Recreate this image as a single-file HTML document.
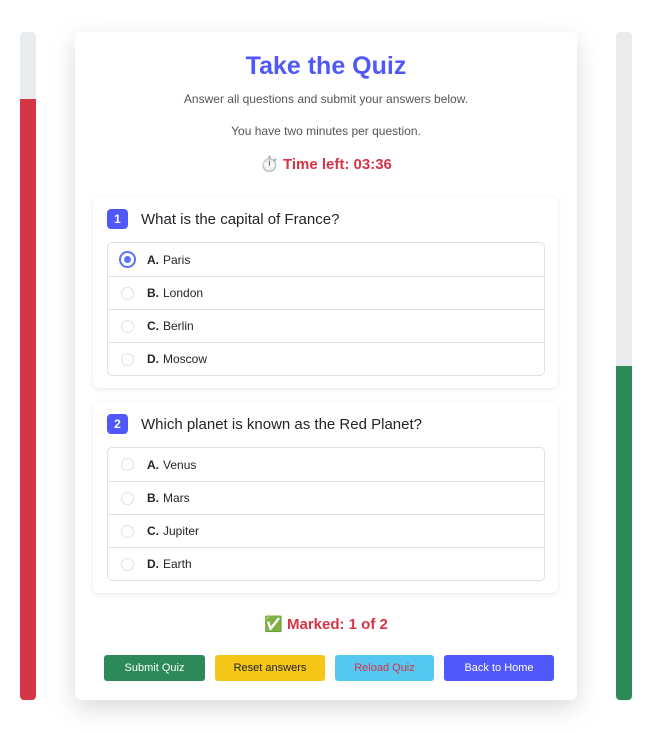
<!DOCTYPE html>
<html><head><style>
*{box-sizing:border-box;margin:0;padding:0}
body{width:657px;height:733px;background:#fff;font-family:"Liberation Sans",sans-serif;position:relative;overflow:hidden}
.bar{position:absolute;width:16px;border-radius:4px;overflow:hidden;background:#e9ecef}
.card{position:absolute;left:75px;top:32px;width:502px;height:668px;background:#fff;border-radius:6px;box-shadow:0 8px 24px rgba(0,0,0,.15)}
.c{position:absolute;left:0;width:100%;text-align:center}
.q{position:absolute;left:18px;width:465px;background:#fff;border-radius:6px;box-shadow:0 1px 5px rgba(0,0,0,.1)}
.qt{position:absolute;left:14px;top:12px;font-size:15px;color:#212529;display:flex;align-items:center}
.num{display:inline-block;width:21px;height:20px;background:#5057fb;color:#fff;border-radius:4px;font-size:12px;font-weight:bold;text-align:center;line-height:20px;margin-right:13px}
.list{position:absolute;left:14px;top:45px;width:438px;border:1px solid #dee2e6;border-radius:5px}
.opt{height:33px;border-top:1px solid #dee2e6;display:flex;align-items:center;padding-left:13px;font-size:12px;color:#212529}
.opt:first-child{border-top:none}
.r{width:13px;height:13px;border:1px solid #dee2e6;border-radius:50%;margin-right:13px}
.sel{width:17px;height:17px;border:2px solid #5b74f5;margin-left:-2px;margin-right:11px;display:flex;align-items:center;justify-content:center}
.sel::after{content:"";width:7px;height:7px;border-radius:50%;background:#5b74f5}
.opt b{margin-right:4px}
.btn{position:absolute;top:623px;height:26px;border-radius:3px;font-size:11px;text-align:center;line-height:26px}
</style></head><body>
<div class="bar" style="left:20px;top:32px;height:668px"><div style="position:absolute;top:67px;bottom:0;width:100%;background:#d63447"></div></div>
<div class="bar" style="left:616px;top:32px;height:668px"><div style="position:absolute;top:334px;bottom:0;width:100%;background:#2b8a57"></div></div>
<div class="card">
<div class="c" style="top:20px;font-size:25px;font-weight:bold;color:#5057fb">Take the Quiz</div>
<div class="c" style="top:60px;font-size:12px;color:#555">Answer all questions and submit your answers below.</div>
<div class="c" style="top:92px;font-size:12px;color:#555">You have two minutes per question.</div>
<div class="c" style="top:123px;font-size:15px;font-weight:bold;color:#d63447">⏱️ Time left: 03:36</div>
<div class="q" style="top:165px;height:191px">
<div class="qt"><span class="num">1</span>What is the capital of France?</div>
<div class="list">
<div class="opt"><span class="r sel"></span><b>A.</b>Paris</div>
<div class="opt"><span class="r"></span><b>B.</b>London</div>
<div class="opt"><span class="r"></span><b>C.</b>Berlin</div>
<div class="opt"><span class="r"></span><b>D.</b>Moscow</div>
</div></div>
<div class="q" style="top:370px;height:191px">
<div class="qt"><span class="num">2</span>Which planet is known as the Red Planet?</div>
<div class="list">
<div class="opt"><span class="r"></span><b>A.</b>Venus</div>
<div class="opt"><span class="r"></span><b>B.</b>Mars</div>
<div class="opt"><span class="r"></span><b>C.</b>Jupiter</div>
<div class="opt"><span class="r"></span><b>D.</b>Earth</div>
</div></div>
<div class="c" style="top:583px;font-size:15px;font-weight:bold;color:#d63447">✅ Marked: 1 of 2</div>
<div class="btn" style="left:29px;width:101px;background:#2b8a57;color:#fff">Submit Quiz</div>
<div class="btn" style="left:140px;width:110px;background:#f5c518;color:#212529">Reset answers</div>
<div class="btn" style="left:260px;width:99px;background:#54c8f0;color:#d63447">Reload Quiz</div>
<div class="btn" style="left:369px;width:110px;background:#5057fb;color:#fff">Back to Home</div>
</div>
</body></html>
